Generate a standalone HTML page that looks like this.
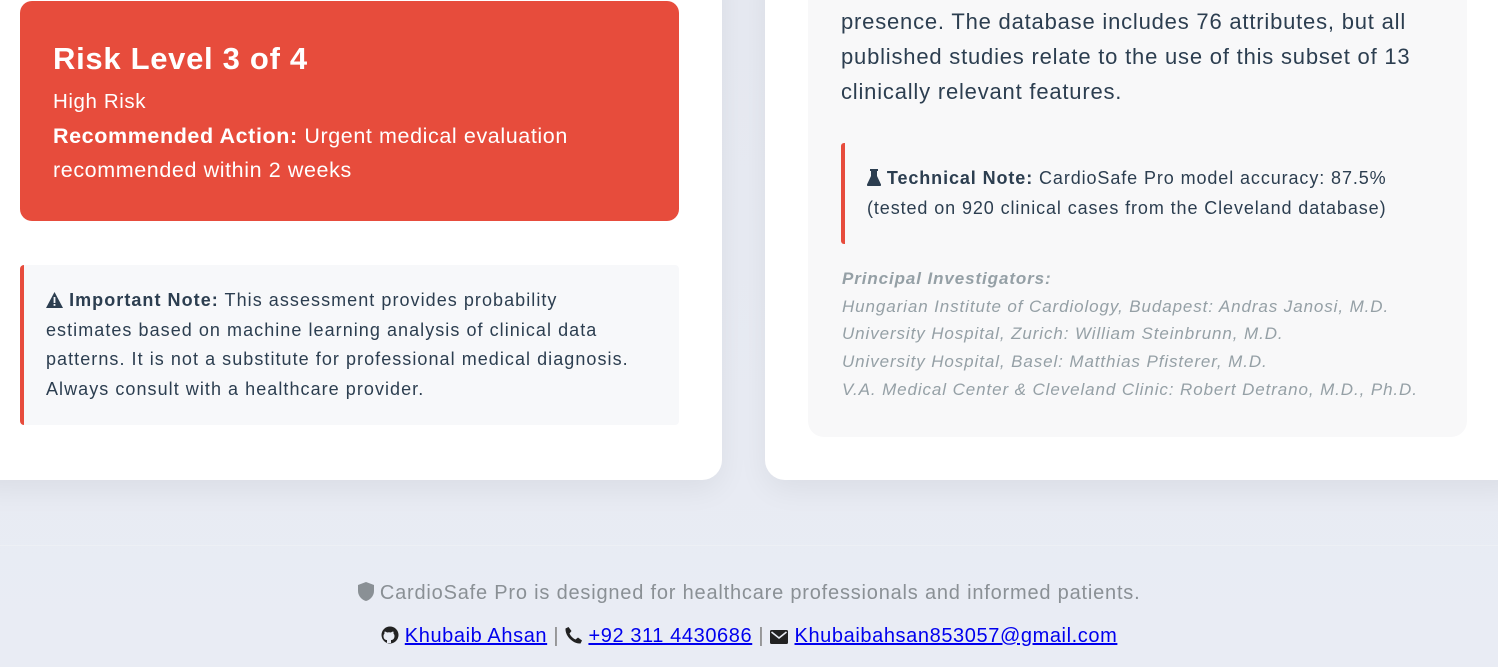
<!DOCTYPE html>
<html><head><meta charset="utf-8"><style>
*{margin:0;padding:0;box-sizing:border-box}
body{width:1498px;height:667px;overflow:hidden;background:linear-gradient(180deg,#e6e9f1,#e9ecf4);font-family:"Liberation Sans",sans-serif;position:relative}
.card{position:absolute;background:#fff;box-shadow:0 10px 30px rgba(0,0,0,.06)}
#l{left:-30px;top:-40px;width:752px;height:520px;border-radius:0 0 20px 20px}
#r{left:765px;top:-40px;width:760px;height:520px;border-radius:20px}
.red{position:absolute;left:20px;top:1px;width:659px;height:220px;background:#e74c3c;border-radius:12px;color:#fff;padding:36px 33px;white-space:nowrap}
.red h2{font-size:31px;font-weight:700;line-height:44px;letter-spacing:.7px}
.red p{font-size:21.5px;line-height:34px;letter-spacing:.6px}
.note{position:absolute;left:20px;top:265px;width:659px;height:160px;background:#f7f8fa;border-left:4px solid #e74c3c;border-radius:4px;padding:21px 22px;font-size:18px;line-height:29.5px;color:#2c3e50;letter-spacing:1.05px;white-space:nowrap}
.grey{position:absolute;left:808px;top:-20px;width:659px;height:457px;background:#f8f8f9;border-radius:16px}
.txt{position:absolute;left:841px;top:4px;font-size:22px;line-height:35px;color:#2c3e50;letter-spacing:.8px;white-space:nowrap}
.tech{position:absolute;left:841px;top:143px;width:600px;height:101px;border-left:4px solid #e74c3c;border-radius:3px;padding:20px 0 0 22px;font-size:18px;line-height:30px;color:#2c3e50;letter-spacing:.9px;white-space:nowrap}
.inv{position:absolute;left:842px;top:265px;font-size:17px;line-height:27.7px;color:#95a0a6;font-style:italic;letter-spacing:.9px;white-space:nowrap}
.f1{position:absolute;left:0;width:1498px;top:582px;text-align:center;color:#8a9095;font-size:20px;letter-spacing:.8px}
.f2{position:absolute;left:0;width:1498px;top:625px;text-align:center;color:#888;font-size:20px;letter-spacing:.6px}
.f2 a{color:#0000ee;text-decoration:underline}
.hr{position:absolute;left:0;right:0;top:545px;height:1px;background:#edf0f5}
svg{vertical-align:-2px}
</style></head><body>
<div class="card" id="l"></div>
<div class="card" id="r"></div>
<div class="red"><h2>Risk Level 3 of 4</h2><p style="font-size:20.5px;line-height:34px;margin-top:4px">High Risk</p><p><b>Recommended Action:</b> Urgent medical evaluation<br>recommended within 2 weeks</p></div>
<div class="note"><svg width="17" height="16" viewBox="0 0 17 16"><path d="M8.5 0 17 16H0z" fill="#2c3e50"/><rect x="7.6" y="5" width="1.8" height="6" fill="#f7f8fa"/><rect x="7.6" y="12" width="1.8" height="1.8" fill="#f7f8fa"/></svg> <b>Important Note:</b> This assessment provides probability<br>estimates based on machine learning analysis of clinical data<br>patterns. It is not a substitute for professional medical diagnosis.<br>Always consult with a healthcare provider.</div>
<div class="grey"></div>
<div class="txt">presence. The database includes 76 attributes, but all<br>published studies relate to the use of this subset of 13<br>clinically relevant features.</div>
<div class="tech"><svg width="14" height="17" viewBox="0 0 14 17"><path d="M3 0h8v2h-1v5l4 8.5c.4 1-.3 1.5-1 1.5H1c-.7 0-1.4-.5-1-1.5L4 7V2H3z" fill="#2c3e50"/></svg> <b>Technical Note:</b> CardioSafe Pro model accuracy: 87.5%<br>(tested on 920 clinical cases from the Cleveland database)</div>
<div class="inv"><b>Principal Investigators:</b><br>Hungarian Institute of Cardiology, Budapest: Andras Janosi, M.D.<br>University Hospital, Zurich: William Steinbrunn, M.D.<br>University Hospital, Basel: Matthias Pfisterer, M.D.<br>V.A. Medical Center &amp; Cleveland Clinic: Robert Detrano, M.D., Ph.D.</div>
<div class="hr"></div>
<div class="f1"><svg width="16" height="19" viewBox="0 0 16 19"><path d="M8 0 16 3v6c0 5-4 9-8 10C4 18 0 14 0 9V3z" fill="#8a9095"/></svg> CardioSafe Pro is designed for healthcare professionals and informed patients.</div>
<div class="f2"><svg width="18" height="18" viewBox="0 0 18 18"><circle cx="9" cy="9" r="8.5" fill="#222"/><path d="M6 17v-3c-2 0-3.5-1.2-3.5-4 0-1 .4-1.8 1-2.4-.1-.6-.1-1.4.2-2.1 1 0 1.7.5 2.3 1a7 7 0 0 1 4 0c.6-.5 1.3-1 2.3-1 .3.7.3 1.5.2 2.1.6.6 1 1.4 1 2.4 0 2.8-1.5 4-3.5 4v3z" fill="#e8ebf3"/></svg> <a>Khubaib Ahsan</a> | <svg width="17" height="17" viewBox="0 0 17 17"><path d="M3.5 0 6.5 4 4.5 6.5c1 2.5 3.5 5 6 6L13 10.5l4 3-1.5 3C8 17 0 9 .5 1.5z" fill="#222"/></svg> <a>+92 311 4430686</a> | <svg width="18" height="14" viewBox="0 0 18 14"><rect width="18" height="14" rx="1.5" fill="#222"/><path d="M1.5 2 9 8l7.5-6" stroke="#e8ebf3" stroke-width="1.6" fill="none"/></svg> <a>Khubaibahsan853057@gmail.com</a></div>
</body></html>
